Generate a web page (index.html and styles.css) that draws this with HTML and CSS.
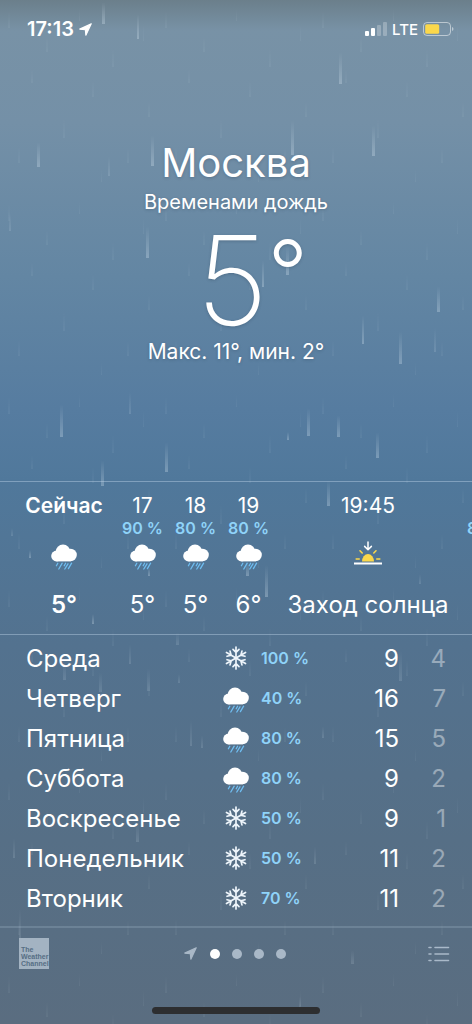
FILE: index.html
```html
<!DOCTYPE html>
<html lang="ru">
<head>
<meta charset="utf-8">
<meta name="viewport" content="width=device-width, initial-scale=1">
<title>Погода — Москва</title>
<link rel="stylesheet" href="styles.css">
</head>
<body>
<svg class="defs" aria-hidden="true">
  <symbol id="rain-cloud" viewBox="0 0 26 26">
    <g fill="#fff">
      <circle cx="5.6" cy="12" r="5.4"/>
      <circle cx="12" cy="8" r="7.4"/>
      <circle cx="19.6" cy="11" r="6.2"/>
      <rect x="5.6" y="9" width="14" height="8.4"/>
    </g>
    <path stroke="#6fbdf0" stroke-width="1.3" stroke-linecap="round" fill="none" d="M6.8 19.2l-1.4 2.6M11.2 19.2L7.8 25M14.6 19.200l-1.400 2.600M17 19.800L13.800 25M20.600 19.200L17.400 24.600"/>
  </symbol>
  <symbol id="snow" viewBox="0 0 24 24">
    <g stroke="#eef5fb" stroke-width="1.7" stroke-linecap="round" stroke-linejoin="round" fill="none">
      <path id="snow-arm" d="M12 12V1M9 3.400L12 6.400l3-3"/>
      <use href="#snow-arm" transform="rotate(60 12 12)"/>
      <use href="#snow-arm" transform="rotate(120 12 12)"/>
      <use href="#snow-arm" transform="rotate(180 12 12)"/>
      <use href="#snow-arm" transform="rotate(240 12 12)"/>
      <use href="#snow-arm" transform="rotate(300 12 12)"/>
    </g>
  </symbol>
  <symbol id="sunset" viewBox="0 0 28 26">
    <path fill="#fbd84b" d="M8 20.5a6 7.600 0 0 1 12 0z"/>
    <path stroke="#fbd84b" stroke-width="1.6" stroke-linecap="round" d="M2.200 18h3M22.800 18h3M6 9.800l2.200 2.200M22 9.800L19.800 12"/>
    <path stroke="#fff" stroke-width="1.5" stroke-linecap="round" stroke-linejoin="round" fill="none" d="M14 1v7.400M10.600 5.400L14 8.800l3.400-3.400"/>
    <path stroke="#fff" stroke-width="2" d="M0 22.500h28"/>
  </symbol>
  <symbol id="arrow" viewBox="0 0 14 14">
    <path fill="currentColor" stroke="currentColor" stroke-width="1.2" stroke-linejoin="round" d="M13.200.8L.8 6.600l6 .6.6 6z"/>
  </symbol>
</svg>

<svg class="rain" viewBox="0 0 472 1024" preserveAspectRatio="none" aria-hidden="true">
  <defs>
    <linearGradient id="fall" x1="0" y1="0" x2="0" y2="1">
      <stop offset="0" stop-color="#dbeaf5" stop-opacity="0"/>
      <stop offset="1" stop-color="#dbeaf5" stop-opacity="1"/>
    </linearGradient>
    <pattern id="drizzle" width="157" height="193" patternUnits="userSpaceOnUse">
      <g fill="url(#fall)" opacity=".06">
        <rect x="8" y="12" width="2" height="16"/><rect x="31" y="70" width="2" height="13"/>
        <rect x="46" y="38" width="2" height="14"/><rect x="63" y="120" width="2" height="18"/>
        <rect x="79" y="9" width="1" height="12"/><rect x="92" y="82" width="2" height="15"/>
        <rect x="112" y="50" width="2" height="17"/><rect x="127" y="149" width="2" height="14"/>
        <rect x="143" y="26" width="1" height="15"/><rect x="148" y="103" width="2" height="14"/>
        <rect x="18" y="148" width="2" height="15"/><rect x="101" y="170" width="1" height="12"/>
      </g>
    </pattern>
  </defs>
  <rect width="472" height="1024" fill="url(#drizzle)"/>
  <g fill="url(#fall)" opacity=".3">
    <rect x="102" y="2" width="3" height="22"/><rect x="137" y="14" width="2" height="25"/>
    <rect x="339" y="52" width="3" height="32"/><rect x="291" y="120" width="3" height="35"/>
    <rect x="372" y="125" width="3" height="31"/><rect x="151" y="135" width="3" height="31"/>
    <rect x="37" y="142" width="3" height="25"/><rect x="146" y="226" width="3" height="32"/>
    <rect x="437" y="286" width="3" height="26"/><rect x="399" y="331" width="3" height="33"/>
    <rect x="362" y="315" width="2" height="29"/><rect x="286" y="246" width="3" height="29"/>
    <rect x="262" y="260" width="2" height="27"/><rect x="376" y="432" width="3" height="26"/>
    <rect x="60" y="404" width="3" height="33"/><rect x="307" y="408" width="3" height="28"/>
    <rect x="337" y="415" width="3" height="22"/><rect x="165" y="442" width="3" height="30"/>
    <rect x="287" y="432" width="2" height="8"/><rect x="101" y="460" width="3" height="26"/>
    <rect x="327" y="480" width="3" height="26"/><rect x="265" y="565" width="3" height="32"/>
    <rect x="246" y="562" width="3" height="14"/><rect x="29" y="550" width="2" height="8"/>
    <rect x="148" y="568" width="2" height="8"/><rect x="92" y="614" width="2" height="10"/>
  </g>
  <g fill="url(#fall)" opacity=".15">
    <rect x="108" y="156" width="2" height="20"/><rect x="9" y="213" width="2" height="18"/>
    <rect x="434" y="328" width="2" height="24"/><rect x="129" y="392" width="2" height="22"/>
    <rect x="419" y="574" width="2" height="10"/><rect x="11" y="528" width="2" height="8"/>
    <rect x="176" y="632" width="3" height="13"/><rect x="63" y="662" width="3" height="18"/>
    <rect x="99" y="672" width="3" height="20"/><rect x="147" y="668" width="3" height="23"/>
    <rect x="178" y="674" width="2" height="9"/><rect x="399" y="650" width="3" height="31"/>
    <rect x="129" y="644" width="2" height="20"/><rect x="190" y="720" width="2" height="26"/>
    <rect x="322" y="726" width="2" height="12"/><rect x="201" y="735" width="2" height="13"/>
    <rect x="136" y="822" width="3" height="20"/><rect x="13" y="838" width="2" height="20"/>
    <rect x="314" y="846" width="2" height="18"/><rect x="19" y="908" width="2" height="36"/>
    <rect x="351" y="950" width="3" height="14"/><rect x="299" y="996" width="2" height="14"/>
  </g>
</svg>

<div class="screen">
  <div class="status">
    <div class="status-side">
      <time>17:13</time>
      <svg class="status-arrow" aria-hidden="true"><use href="#arrow"/></svg>
    </div>
    <div class="status-side">
      <svg class="signal" viewBox="0 0 22 14" aria-label="Сигнал" role="img">
        <g fill="#fff">
          <rect x="0" y="9" width="4" height="5" rx="1"/><rect x="6" y="6" width="4" height="8" rx="1"/>
          <rect x="12" y="3" width="4" height="11" rx="1" opacity=".25"/><rect x="18" y="0" width="4" height="14" rx="1" opacity=".25"/>
        </g>
      </svg>
      <span class="network">LTE</span>
      <svg class="battery" viewBox="0 0 31 14" aria-label="Батарея" role="img">
        <rect x=".5" y=".5" width="27" height="13" rx="3.5" fill="none" stroke="#fff" stroke-opacity=".5"/>
        <rect x="2.2" y="2.2" width="14" height="9.6" rx="1.6" fill="#fbd84b"/>
        <path d="M29 5v4q1.500-.5 1.500-2T29 5z" fill="#fff" opacity=".5"/>
      </svg>
    </div>
  </div>

  <header class="summary">
    <h1>Москва</h1>
    <p class="condition">Временами дождь</p>
    <p class="temperature"><span class="digits">5</span><span class="degree">°</span></p>
    <p class="range">Макс. 11°, мин. 2°</p>
  </header>

  <ul class="hourly">
    <li class="hour now"><span class="when">Сейчас</span><span class="chance"></span><svg class="hour-icon"><use href="#rain-cloud"/></svg><span class="value">5°</span></li>
    <li class="hour"><span class="when">17</span><span class="chance">90 %</span><svg class="hour-icon"><use href="#rain-cloud"/></svg><span class="value">5°</span></li>
    <li class="hour"><span class="when">18</span><span class="chance">80 %</span><svg class="hour-icon"><use href="#rain-cloud"/></svg><span class="value">5°</span></li>
    <li class="hour"><span class="when">19</span><span class="chance">80 %</span><svg class="hour-icon"><use href="#rain-cloud"/></svg><span class="value">6°</span></li>
    <li class="hour event"><span class="when">19:45</span><span class="chance"></span><svg class="hour-icon sun"><use href="#sunset"/></svg><span class="value">Заход солнца</span></li>
    <li class="hour"><span class="when"></span><span class="chance">80 %</span></li>
  </ul>

  <div class="daily">
    <table>
      <tbody>
        <tr><th scope="row">Среда</th><td class="sky"><svg class="flake"><use href="#snow"/></svg></td><td class="chance">100 %</td><td class="high">9</td><td class="low">4</td></tr>
        <tr><th scope="row">Четверг</th><td class="sky"><svg class="cloud"><use href="#rain-cloud"/></svg></td><td class="chance">40 %</td><td class="high">16</td><td class="low">7</td></tr>
        <tr><th scope="row">Пятница</th><td class="sky"><svg class="cloud"><use href="#rain-cloud"/></svg></td><td class="chance">80 %</td><td class="high">15</td><td class="low">5</td></tr>
        <tr><th scope="row">Суббота</th><td class="sky"><svg class="cloud"><use href="#rain-cloud"/></svg></td><td class="chance">80 %</td><td class="high">9</td><td class="low">2</td></tr>
        <tr><th scope="row">Воскресенье</th><td class="sky"><svg class="flake"><use href="#snow"/></svg></td><td class="chance">50 %</td><td class="high">9</td><td class="low">1</td></tr>
        <tr><th scope="row">Понедельник</th><td class="sky"><svg class="flake"><use href="#snow"/></svg></td><td class="chance">50 %</td><td class="high">11</td><td class="low">2</td></tr>
        <tr><th scope="row">Вторник</th><td class="sky"><svg class="flake"><use href="#snow"/></svg></td><td class="chance">70 %</td><td class="high">11</td><td class="low">2</td></tr>
      </tbody>
    </table>
  </div>

  <footer class="bar">
    <div class="tools">
      <a class="provider" href="#">The<br>Weather<br>Channel</a>
      <nav class="pages" aria-label="Города">
        <svg class="page-arrow" aria-hidden="true"><use href="#arrow"/></svg>
        <button class="dot current" aria-label="Москва"></button>
        <button class="dot" aria-label="Город 2"></button>
        <button class="dot" aria-label="Город 3"></button>
        <button class="dot" aria-label="Город 4"></button>
      </nav>
      <button class="list" aria-label="Список городов">
        <svg viewBox="0 0 22 16"><path stroke="#a9b9c9" stroke-width="1.6" stroke-linecap="round" d="M1 1.500h2M7 1.500h13.500M1 8h2M7 8h13.500M1 14.500h2M7 14.500h13.500"/></svg>
      </button>
    </div>
    <div class="home"></div>
  </footer>
</div>
</body>
</html>
```
FILE: styles.css
```css
* { box-sizing: border-box; }

body {
  margin: 0;
  position: relative;
  color: #fff;
  font-family: Inter, "Liberation Sans", sans-serif;
  background: linear-gradient(#6b7f8b 0, #7892a6 3%, #7490a7 12%, #6386a3 27%, #567ca0 40%, #50789b 47%, #53728f 63%, #566f86 82%, #5a6d80 100%);
}

.defs { position: absolute; width: 0; height: 0; }
.rain { position: absolute; top: 0; left: 0; width: 100%; height: 100%; }

.screen {
  position: relative;
  display: flex;
  flex-direction: column;
  min-height: 100vh;
}

.status {
  display: flex;
  justify-content: space-between;
  align-items: center;
  height: 60px;
  padding: 0 18px 2px 27px;
  font-size: 20px;
  font-weight: 600;
}
.status-side { display: flex; align-items: center; gap: 5px; }
.status-arrow { width: 13px; height: 13px; }
.signal { width: 22px; height: 14px; }
.network { font-size: 15px; font-weight: 500; }
.battery { width: 31px; height: 14px; }

.summary {
  flex: 1;
  padding: 78px 0 100px;
  text-align: center;
  text-shadow: 0 1px 3px rgba(40, 60, 80, .3);
}
.summary p, .summary h1 { margin: 0; }
.summary h1 { font-size: 40px; line-height: 50px; font-weight: 400; }
.summary .condition { font-size: 20px; line-height: 28px; }
.summary .temperature {
  display: grid;
  grid-template-columns: 1fr auto 1fr;
  padding: 4px 8px 0 0;
  font-weight: 200;
  text-align: left;
}
.digits { grid-column: 2; font-size: 124px; line-height: 120px; }
.degree { font-size: 88px; font-weight: 300; line-height: 104px; height: 104px; }
.summary .range { font-size: 21px; line-height: 24px; }

.hourly {
  display: flex;
  gap: 12px;
  margin: 0;
  padding: 12px 0 13px 26px;
  list-style: none;
  overflow: hidden;
  border-top: 1px solid rgba(200, 220, 240, .4);
}
.hour {
  flex: none;
  display: flex;
  flex-direction: column;
  align-items: center;
  width: 41px;
  white-space: nowrap;
}
.now { width: 76px; margin-right: 8px; font-weight: 600; }
.event { width: 158px; margin: 0 8px; }
.when { font-size: 21px; line-height: 24px; height: 24px; }
.hour .chance { height: 20px; line-height: 20px; }
.hour-icon { width: 26px; height: 26px; margin: 6px 0 19px; }
.hour-icon.sun { width: 28px; margin: 3px 0 22px; }
.value { font-size: 24px; line-height: 32px; }

.chance { color: #8fd3f9; font-size: 16px; font-weight: 600; }

.daily {
  padding: 3px 26px 8px;
  border-top: 1px solid rgba(200, 220, 240, .4);
}
.daily table { width: 100%; border-collapse: collapse; table-layout: fixed; }
.daily tr { height: 40px; }
.daily th, .daily td { padding: 0; font-size: 24px; font-weight: 400; text-align: left; }
.daily .sky { width: 38px; }
.daily svg { display: block; }
.daily .chance { width: 78px; font-size: 16px; font-weight: 600; }
.daily .high { width: 60px; text-align: right; }
.daily .low { width: 47px; text-align: right; opacity: .4; }
.cloud { width: 26px; height: 26px; margin-top: 4px; }
.flake { width: 24px; height: 24px; margin-left: 1px; }

.bar {
  display: flex;
  flex-direction: column;
  justify-content: space-between;
  align-items: center;
  height: 98px;
  padding: 10px 0 10px;
  border-top: 2px solid rgba(200, 220, 240, .18);
}
.tools {
  display: grid;
  grid-template-columns: 1fr auto 1fr;
  align-items: center;
  width: 100%;
  padding: 0 22px 0 19px;
}
.provider {
  display: flex;
  align-items: flex-end;
  width: 30px;
  height: 31px;
  padding: 0 0 2px 2px;
  background: #a3b3c2;
  color: #566e84;
  font: 700 7px/7px "Liberation Sans", sans-serif;
  text-decoration: none;
}
.pages { display: flex; align-items: center; gap: 12px; color: #a9b8c7; }
.page-arrow { width: 13px; height: 13px; margin-right: 1px; }
.dot { width: 10px; height: 10px; padding: 0; border: 0; border-radius: 50%; background: #a9b8c7; }
.dot.current { background: #fff; }
.list { justify-self: end; width: 22px; height: 16px; padding: 0; border: 0; background: none; }
.list svg { display: block; width: 22px; height: 16px; }
.home { width: 168px; height: 7px; border-radius: 4px; background: #2d2e30; }
```
